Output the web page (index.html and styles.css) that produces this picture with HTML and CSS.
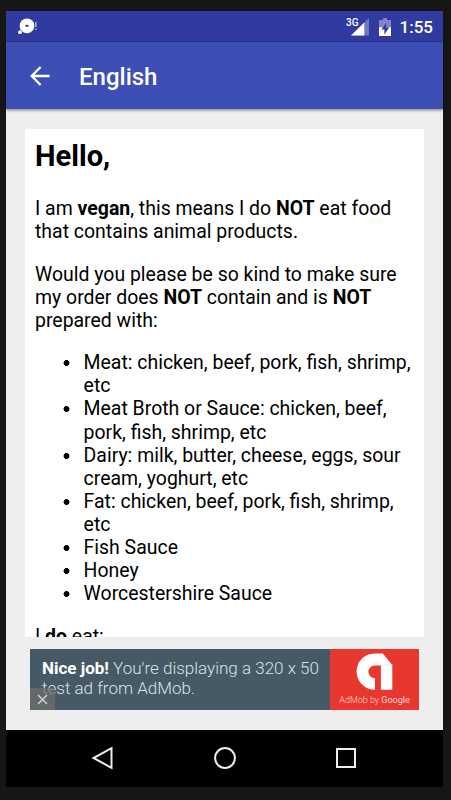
FILE: index.html
```
<!DOCTYPE html>
<html lang="en">
<head>
    <meta charset="UTF-8">
    <meta name="viewport" content="width=device-width, initial-scale=1.0">
    <title>English</title>
    <link rel="stylesheet" href="styles.css">
</head>
<body>
    <div class="screen">
        <div class="status-bar">
            <svg class="notification" width="20" height="18" viewBox="0 0 20 18">
                <circle cx="9" cy="7.8" r="7.4" fill="#fff"/>
                <circle cx="2" cy="14.2" r="1.9" fill="#fff"/>
                <ellipse cx="9" cy="7.8" rx="1.8" ry="1.1" fill="#303f9f"/>
                <path d="M17.9 4v5M17.9 10.5v1.5" stroke="#c5caf0" stroke-width="1.3"/>
            </svg>
            <div class="status-icons">
                <span class="network">3G</span>
                <svg class="signal" width="18" height="18" viewBox="0 0 18 18">
                    <path d="M18 0v17.4H0z" fill="#7078c2"/>
                    <path d="M13.3 4.5v12.9H0z" fill="#fff"/>
                </svg>
                <svg class="battery" width="12" height="18" viewBox="0 0 12 18">
                    <path d="M4 0h4v2h4v8H0V2h4z" fill="#7d86cb"/>
                    <path d="M0 9.4h12V18H0z" fill="#fff"/>
                    <path d="M7.2 4.8L2.4 11.6h3v4.8l4.8-7h-3z" fill="#303a9f"/>
                </svg>
                <span class="clock">1:55</span>
            </div>
        </div>

        <div class="toolbar">
            <svg class="back" width="20" height="20" viewBox="0 0 20 20" fill="none" stroke="#fff" stroke-width="2.3">
                <path d="M19.6 10H2M10.6 1L1.7 10l8.9 9"/>
            </svg>
            <div class="title">English</div>
        </div>

        <div class="content">
            <div class="card">
                <h2>Hello,</h2>
                <p>I am <b>vegan</b>, this means I do <b>NOT</b> eat food that contains animal products.</p>
                <p>Would you please be so kind to make sure my order does <b>NOT</b> contain and is <b>NOT</b> prepared with:</p>
                <ul>
                    <li>Meat: chicken, beef, pork, fish, shrimp, etc</li>
                    <li>Meat Broth or Sauce: chicken, beef, pork, fish, shrimp, etc</li>
                    <li>Dairy: milk, butter, cheese, eggs, sour cream, yoghurt, etc</li>
                    <li>Fat: chicken, beef, pork, fish, shrimp, etc</li>
                    <li>Fish Sauce</li>
                    <li>Honey</li>
                    <li>Worcestershire Sauce</li>
                </ul>
                <p>I <b>do</b> eat:</p>
            </div>

            <div class="ad">
                <div class="ad-text"><b>Nice job!</b> You're displaying a 320 x 50 test ad from AdMob.</div>
                <div class="ad-logo">
                    <svg width="37" height="38" viewBox="0 0 37 38">
                        <path d="M19 36.8A18.2 18.2 0 0 1 18.6.4h8.2L36.3 12v24.8H24.9V12.4h-6.3a6.4 6.4 0 0 0 .4 12.8z" fill="#fff"/>
                        <path d="M24.9 12.4L36.3 12" stroke="#e0e0e0" stroke-width=".7"/>
                    </svg>
                    <span>AdMob by <b>Google</b></span>
                </div>
                <div class="ad-close">
                    <svg width="11" height="11" viewBox="0 0 11 11" stroke="#ccc" stroke-width="1.6">
                        <path d="M1 1l9 9M10 1l-9 9"/>
                    </svg>
                </div>
            </div>
        </div>

        <div class="nav-bar">
            <svg width="24" height="24" viewBox="0 0 24 24"><path d="M20.5 2.2v19.6L2.5 12z"/></svg>
            <svg width="24" height="24" viewBox="0 0 24 24"><circle cx="12" cy="12" r="9.9"/></svg>
            <svg width="24" height="24" viewBox="0 0 24 24"><path d="M3 3h18v18H3z"/></svg>
        </div>
    </div>
</body>
</html>
```

FILE: styles.css
```
* {
    box-sizing: border-box;
}
body {
    margin: 0;
    height: 800px;
    padding: 11px 8px 13px 6px;
    background-color: #161616;
    font-family: Roboto, "Liberation Sans", sans-serif;
    color: #000;
    overflow: hidden;
}
svg {
    display: block;
    flex: none;
}
.screen {
    display: flex;
    flex-direction: column;
    height: 776px;
    background-color: #eee;
}
.status-bar {
    display: flex;
    justify-content: space-between;
    height: 31px;
    padding: 7px 10px 0 12px;
    background-color: #303a9f;
    border-bottom: 1px solid #2b358f;
}
.status-icons {
    display: flex;
    color: #fff;
}
.network {
    margin-right: -8px;
    font-size: 10px;
    line-height: 9px;
    font-weight: 500;
}
.battery {
    margin: 0 9px 0 10px;
}
.clock {
    font-size: 17px;
    line-height: 19px;
    font-weight: 500;
}
.toolbar {
    display: flex;
    align-items: center;
    height: 67px;
    padding-left: 24px;
    background-color: #3d4fb7;
    box-shadow: 0 1px 3px rgba(0,0,0,0.5);
}
.title {
    margin: 3px 0 0 29px;
    color: #fff;
    font-size: 24px;
    font-weight: 500;
}
.content {
    flex: 1;
    padding: 20px 19px 0;
}
.card {
    height: 508px;
    padding: 10px;
    background-color: white;
    font-size: 19.45px;
    line-height: 23.1px;
    overflow: hidden;
}
.card h2 {
    margin: 0 0 24px;
    font-size: 29.1px;
    line-height: 34px;
}
.card p,
.card ul {
    margin: 0 0 19.4px;
}
.card ul {
    padding-left: 27.6px;
    list-style: none;
}
.card li {
    padding-left: 21px;
    background: radial-gradient(circle at 3.5px 12px, #000 2.6px, transparent 3.3px) no-repeat;
}
.ad {
    position: relative;
    display: flex;
    height: 61px;
    margin: 12px 5px 0;
    background-color: #455a64;
}
.ad-text {
    flex: 1;
    padding: 9px 0 0 12px;
    color: #dce1e4;
    font-size: 17px;
    line-height: 20px;
    font-weight: 300;
}
.ad-text b {
    color: #fff;
    font-weight: 700;
}
.ad-logo {
    display: flex;
    flex-direction: column;
    align-items: center;
    width: 89px;
    padding-top: 4px;
    background-color: #e8372e;
    color: #ffd9d6;
    font-size: 9px;
    line-height: 18px;
    font-weight: 300;
}
.ad-logo b {
    font-weight: 400;
}
.ad-close {
    position: absolute;
    left: 0;
    bottom: 0;
    display: flex;
    align-items: center;
    justify-content: center;
    width: 25px;
    height: 22px;
    background-color: rgba(110,110,110,0.75);
}
.nav-bar {
    display: flex;
    justify-content: space-between;
    height: 57px;
    padding: 16px 85px 0 85px;
    background-color: #000;
}
.nav-bar svg {
    fill: none;
    stroke: #eee;
    stroke-width: 2;
}
```
